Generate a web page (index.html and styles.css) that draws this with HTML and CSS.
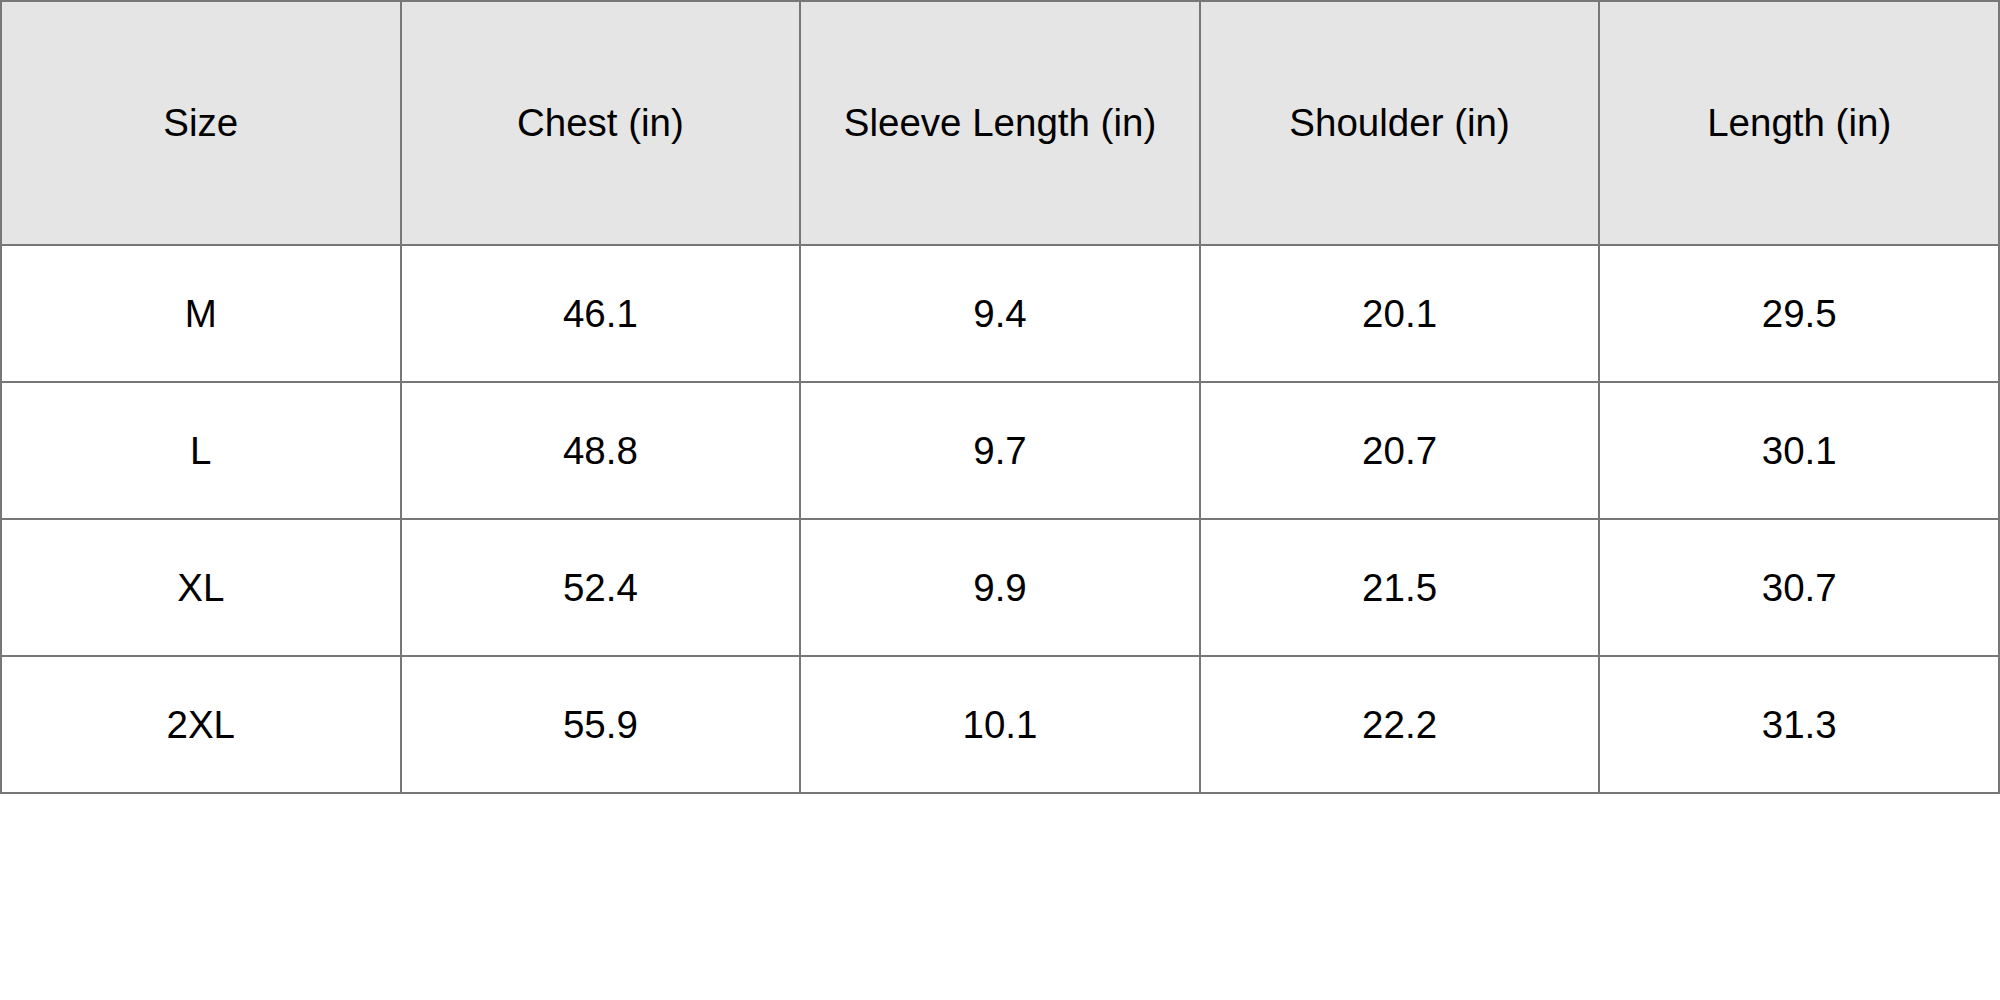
FILE: index.html
```html
<!DOCTYPE html>
<html>
<head>
<meta charset="utf-8">
<link rel="stylesheet" href="styles.css">
</head>
<body>
<table class="size-table">
  <thead>
    <tr class="head-row">
      <th>Size</th>
      <th>Chest (in)</th>
      <th>Sleeve Length (in)</th>
      <th>Shoulder (in)</th>
      <th>Length (in)</th>
    </tr>
  </thead>
  <tbody>
    <tr><td>M</td><td>46.1</td><td>9.4</td><td>20.1</td><td>29.5</td></tr>
    <tr><td>L</td><td>48.8</td><td>9.7</td><td>20.7</td><td>30.1</td></tr>
    <tr><td>XL</td><td>52.4</td><td>9.9</td><td>21.5</td><td>30.7</td></tr>
    <tr><td>2XL</td><td>55.9</td><td>10.1</td><td>22.2</td><td>31.3</td></tr>
  </tbody>
</table>
</body>
</html>
```
FILE: styles.css
```css
html, body {
  margin: 0;
  padding: 0;
  background: #ffffff;
}
.size-table {
  width: 2000px;
  border-collapse: collapse;
  table-layout: fixed;
  font-family: "Liberation Sans", Arial, sans-serif;
  font-size: 38.5px;
  color: #000000;
}
.size-table th,
.size-table td {
  border: 2px solid #777777;
  text-align: center;
  vertical-align: middle;
  padding: 0;
  font-weight: normal;
}
.size-table th {
  background: #e5e5e5;
  height: 242px;
}
.size-table td {
  height: 135px;
}
```
